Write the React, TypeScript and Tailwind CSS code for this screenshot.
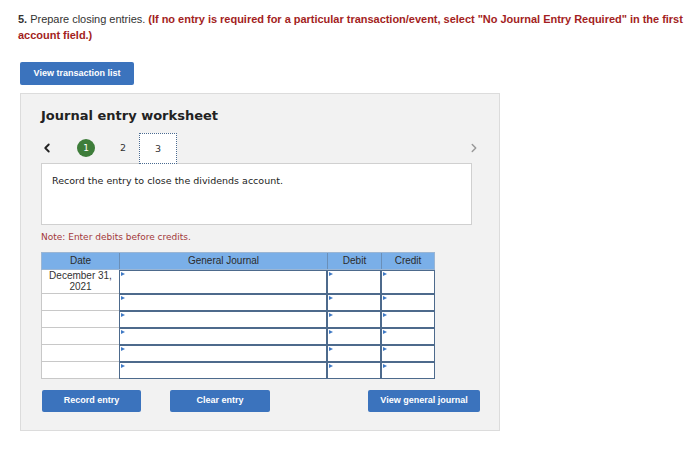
import { ChevronLeft, ChevronRight } from "lucide-react";

const rows = [0, 1, 2, 3, 4, 5];

const InputCell = ({ w, h }: { w: string; h: string }) => (
  <div className={`relative bg-white border border-[#4d6a8c] ${w} ${h}`}>
    <span className="absolute left-[1px] top-[1px] w-0 h-0 border-t-[2.5px] border-b-[2.5px] border-l-[4px] border-t-transparent border-b-transparent border-l-[#3f79c4]" />
  </div>
);

export default function App() {
  return (
    <div className="w-[700px] h-[472px] bg-white font-['Liberation_Sans',Arial,sans-serif] text-[#333]">
      <p className="pt-[11px] pl-[18px] pr-[6px] text-[11px] leading-[16px] tracking-[-0.02px] text-[#333]">
        <b>5.</b> Prepare closing entries.{" "}
        <b className="text-[#a31e22]">
          (If no entry is required for a particular transaction/event, select "No Journal Entry Required" in the first
          account field.)
        </b>
      </p>

      <div className="pl-[20px] pt-[16px]">
        <button className="w-[114px] h-[23px] rounded-[2px] bg-[#3b73bd] text-white text-[9px] font-bold">
          View transaction list
        </button>
      </div>

      <div className="ml-[20px] mt-[8px] w-[480px] h-[338px] bg-[#f2f2f2] border border-[#dcdcdc] pl-[20px] pt-[13px]">
        <h2 className="font-['DejaVu_Sans',Verdana,sans-serif] font-bold text-[13px] leading-[18px] text-[#222]">
          Journal entry worksheet
        </h2>

        <div className="mt-[8px] flex items-center h-[30px] w-[440px]">
          <ChevronLeft className="w-[14px] h-[14px] text-[#222] ml-[-1px] shrink-0" strokeWidth={3.2} />
          <div className="ml-[23px] w-[18px] h-[18px] shrink-0 rounded-full bg-[#3e7d3a] text-white text-[9px] flex items-center justify-center font-['DejaVu_Sans',sans-serif]">
            1
          </div>
          <div className="ml-[25px] w-[10px] text-[9.5px] text-[#333] font-['DejaVu_Sans',sans-serif]">2</div>
          <div className="ml-[9px] w-[38px] h-[31px] shrink-0 bg-white border border-dotted border-[#4a6a90] flex items-center justify-center text-[9.5px] text-[#333] font-['DejaVu_Sans',sans-serif] mb-[-1px] relative z-10">
            3
          </div>
          <div className="flex-1" />
          <ChevronRight className="w-[14px] h-[14px] text-[#999] shrink-0" strokeWidth={2.5} />
        </div>

        <div className="w-[431px] h-[62px] bg-white border border-[#d0d0d0] pl-[10px] pt-[10px] font-['DejaVu_Sans',Verdana,sans-serif] text-[9.5px] text-[#222]">
          Record the entry to close the dividends account.
        </div>

        <p className="mt-[6px] font-['DejaVu_Sans',Verdana,sans-serif] text-[9px] text-[#a3383a]">
          Note: Enter debits before credits.
        </p>

        <div className="mt-[7px] w-[394px] text-[10px]">
          <div className="flex h-[18px] bg-[#7aafe8] border border-[#9bb6d4] text-[#2b2b2b]">
            <div className="w-[78px] flex items-center justify-center border-r border-[#6a8fb8]">Date</div>
            <div className="w-[208px] flex items-center justify-center border-r border-[#6a8fb8]">General Journal</div>
            <div className="w-[54px] flex items-center justify-center border-r border-[#6a8fb8]">Debit</div>
            <div className="flex-1 flex items-center justify-center">Credit</div>
          </div>
          {rows.map((r) => {
            const h = r === 0 ? "h-[24px]" : "h-[17px]";
            return (
              <div key={r} className="flex">
                <div
                  className={`w-[78px] ${h} bg-white border-l border-b border-[#c8c8c8] flex items-center justify-center text-center leading-[11px] text-[#333]`}
                >
                  {r === 0 ? (
                    <span>
                      December 31,
                      <br />
                      2021
                    </span>
                  ) : null}
                </div>
                <InputCell w="w-[208px]" h={h} />
                <InputCell w="w-[54px]" h={h} />
                <InputCell w="w-[54px]" h={h} />
              </div>
            );
          })}
        </div>

        <div className="mt-[11px] flex items-center">
          <button className="ml-[1px] w-[99px] h-[22px] shrink-0 rounded-[2px] bg-[#3b73bd] text-white text-[9px] font-bold">
            Record entry
          </button>
          <button className="ml-[29px] w-[100px] h-[22px] shrink-0 rounded-[2px] bg-[#3b73bd] text-white text-[9px] font-bold">
            Clear entry
          </button>
          <button className="ml-[98px] w-[112px] h-[22px] shrink-0 rounded-[2px] bg-[#3b73bd] text-white text-[9px] font-bold">
            View general journal
          </button>
        </div>
      </div>
    </div>
  );
}
